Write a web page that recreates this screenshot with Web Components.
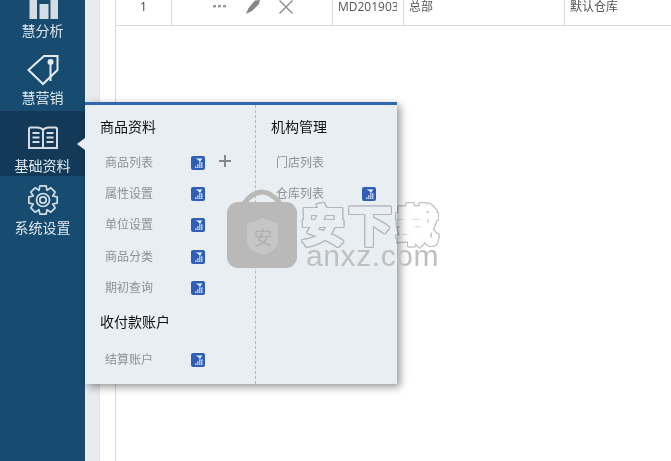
<!DOCTYPE html>
<html>
<head>
<meta charset="utf-8">
<style>
  html, body { margin: 0; height: 100%; overflow: hidden; background: #fff; }
  body { font-family: "Liberation Sans", "Noto Sans CJK SC", sans-serif; }
</style>
</head>
<body>
<app-shell>
  <side-nav slot="nav">
    <nav-item label="慧分析" icon="chart" height="46" pad="6" gap="2"></nav-item>
    <nav-item label="慧营销" icon="tag" height="65" pad="4" gap="3"></nav-item>
    <nav-item label="基础资料" icon="book" height="65" pad="1" gap="7" active></nav-item>
    <nav-item label="系统设置" icon="gear" height="65" pad="4" gap="3"></nav-item>
  </side-nav>
  <data-row slot="main"></data-row>
  <pop-menu slot="main"></pop-menu>
  <water-mark slot="main"></water-mark>
</app-shell>

<script>
const FONT = '"Liberation Sans", "Noto Sans CJK SC", sans-serif';

function gearPath(cx, cy, ro, ri, n) {
  // one tooth = four corners, going round the wheel
  const pts = [];
  const step = Math.PI * 2 / n;
  for (let i = 0; i < n; i++) {
    const a = i * step - Math.PI / 2;
    [[ri, -0.5], [ro, -0.27], [ro, 0.27], [ri, 0.5]].forEach(([r, k]) => {
      pts.push((cx + r * Math.cos(a + k * step)).toFixed(1) + ' ' + (cy + r * Math.sin(a + k * step)).toFixed(1));
    });
  }
  return 'M' + pts.join(' L') + ' Z';
}

class AppShell extends HTMLElement {
  constructor() {
    super();
    this.attachShadow({ mode: 'open' });
    this.shadowRoot.innerHTML = `
      <style>
        :host { display: flex; height: 461px; width: 671px; overflow: hidden; }
        .nav { flex: 0 0 85px; background: #174c70; }
        .gutter { flex: 0 0 15px; background: #e8ecf1; border-right: 1px solid #dfe3e8; box-sizing: border-box; }
        .spacer { flex: 0 0 16px; background: #fff; border-right: 1px solid #d9d9d9; box-sizing: border-box; }
        .main { flex: 1; position: relative; background: #fff; }
      </style>
      <div class="nav"><slot name="nav"></slot></div>
      <div class="gutter"></div>
      <div class="spacer"></div>
      <div class="main"><slot name="main"></slot></div>
    `;
  }
}

const ICONS = {
  chart: `<svg width="30" height="20" viewBox="0 0 30 20"><g fill="#d5dde4"><rect x="1.5" y="-4" width="7.5" height="23"/><rect x="11.5" y="4" width="9" height="15"/><rect x="22.5" y="-4" width="8" height="23"/></g></svg>`,
  tag: `<svg width="34" height="34" viewBox="0 0 34 34" fill="none" stroke="#e6ebef" stroke-width="2"><path d="M2.5 18 L18 4 H31.5 V18 L17 32 Z"/><circle cx="24.5" cy="10" r="2" fill="#e6ebef"/><path d="M24.5 11 V29"/></svg>`,
  book: `<svg width="32" height="25" viewBox="0 0 32 25" fill="none" stroke="#d5dde4" stroke-width="2"><path d="M16 5 Q14 2.5 10 2.5 H3.5 Q2 2.5 2 4 V23 H16 Z"/><path d="M16 5 Q18 2.5 22 2.5 H28.5 Q30 2.5 30 4 V23 H16 Z"/><path d="M5.5 8 H12.5 M5.5 12.5 H12.5 M5.5 17 H12.5 M19.5 8 H26.5 M19.5 12.5 H26.5 M19.5 17 H26.5" stroke-width="2.2"/></svg>`,
  gear: `<svg width="32" height="32" viewBox="0 0 32 32" fill="none" stroke="#d5dde4" stroke-width="1.7" stroke-linejoin="round"><path d="${gearPath(16, 16, 14.5, 10.5, 8)}"/><circle cx="16" cy="16" r="6.5"/><circle cx="16" cy="16" r="3.2"/></svg>`
};

class SideNav extends HTMLElement {
  constructor() {
    super();
    this.attachShadow({ mode: 'open' });
    this.shadowRoot.innerHTML = `
      <style>:host { display: flex; flex-direction: column; }</style>
      <slot></slot>
    `;
  }
}

class NavItem extends HTMLElement {
  constructor() {
    super();
    this.attachShadow({ mode: 'open' });
  }
  connectedCallback() {
    const active = this.hasAttribute('active');
    this.shadowRoot.innerHTML = `
      <style>
        :host { display: flex; flex-direction: column; align-items: center; justify-content: flex-end;
                height: ${this.getAttribute('height')}px; box-sizing: border-box;
                padding-bottom: ${this.getAttribute('pad')}px;
                background: ${active ? '#123a58' : 'transparent'}; color: #dfe6eb;
                font: 14px ${FONT}; overflow: hidden; }
        .icon { display: flex; justify-content: center; margin-bottom: ${this.getAttribute('gap')}px; }
        svg { display: block; flex: none; }
        .label { line-height: 18px; white-space: nowrap; }
      </style>
      <div class="icon">${ICONS[this.getAttribute('icon')]}</div>
      <div class="label">${this.getAttribute('label')}</div>
    `;
  }
}

class DataRow extends HTMLElement {
  constructor() {
    super();
    this.attachShadow({ mode: 'open' });
    this.shadowRoot.innerHTML = `
      <style>
        :host { display: grid; grid-template-columns: 56px 161px 71px 161px 1fr; height: 26px; box-sizing: border-box;
                border-bottom: 1px solid #d9d9d9; color: #555; font: 12px/12px "Open Sans", "Noto Sans CJK SC", sans-serif; }
        .cell { display: flex; align-items: center; height: 25px; box-sizing: border-box; padding-bottom: 12px;
                white-space: nowrap; border-right: 1px solid #d9d9d9; }
        .cell:last-child { border-right: 0; }
        .num { justify-content: center; color: #444; }
        .ops { padding-left: 41px; }
        .code, .txt { padding-left: 5px; }
        .code span { display: block; width: 59px; overflow-x: clip; }
        svg { display: block; flex: none; }
      </style>
      <div class="cell num">1</div>
      <div class="cell ops">
        <svg width="13" height="3" viewBox="0 0 13 3" fill="#999"><rect width="3" height="2.4"/><rect x="5" width="3" height="2.4"/><rect x="10" width="3" height="2.4"/></svg>
        <svg style="margin-left:20px" width="14" height="14" viewBox="0 0 14 14" fill="#868686"><path d="M0 14 L2.5 8 L9 0.5 L14 0 L13 4 L6 11 Z"/></svg>
        <svg style="margin-left:19px" width="14" height="14" viewBox="0 0 14 14" stroke="#919191" stroke-width="1.5" fill="none"><path d="M0.5 0.5 L13.5 13.5 M13.5 0.5 L0.5 13.5"/></svg>
      </div>
      <div class="cell code"><span>MD201903</span></div>
      <div class="cell txt">总部</div>
      <div class="cell txt">默认仓库</div>
    `;
  }
}

class PopMenu extends HTMLElement {
  constructor() {
    super();
    this.attachShadow({ mode: 'open' });
    this.shadowRoot.innerHTML = `
      <style>
        :host { display: flex; position: absolute; left: -31px; top: 102px; width: 312px; height: 282px; box-sizing: border-box;
                background: #e9eef3; border-top: 3px solid #2f68ad; box-shadow: 3px 3px 8px rgba(0,0,0,.42); font: 12px ${FONT}; }
        :host::before { content: ""; position: absolute; left: -8px; top: 33px; border: 6px solid transparent; border-left-width: 0; border-right: 8px solid #e9eef3; }
        .col { box-sizing: border-box; padding-left: 15px; display: flex; flex-direction: column; }
        .left { width: 171px; border-right: 1px dashed #b4b8bd; }
        .right { flex: 1; }
      </style>
      <div class="col left">
        <menu-head>商品资料</menu-head>
        <menu-link plus>商品列表</menu-link>
        <menu-link>属性设置</menu-link>
        <menu-link>单位设置</menu-link>
        <menu-link>商品分类</menu-link>
        <menu-link>期初查询</menu-link>
        <menu-head second>收付款账户</menu-head>
        <menu-link>结算账户</menu-link>
      </div>
      <div class="col right">
        <menu-head>机构管理</menu-head>
        <menu-link noicon>门店列表</menu-link>
        <menu-link>仓库列表</menu-link>
      </div>
    `;
  }
}

class MenuHead extends HTMLElement {
  constructor() {
    super();
    this.attachShadow({ mode: 'open' });
  }
  connectedCallback() {
    const second = this.hasAttribute('second');
    this.shadowRoot.innerHTML = `
      <style>
        :host { display: block; color: #111; font-size: 14px; line-height: 18px;
                padding-top: ${second ? 11 : 13}px; padding-bottom: ${second ? 12 : 10}px; }
      </style>
      <slot></slot>
    `;
  }
}

class MenuLink extends HTMLElement {
  constructor() {
    super();
    this.attachShadow({ mode: 'open' });
  }
  connectedCallback() {
    const icon = this.hasAttribute('noicon') ? '' : `
      <svg class="badge" width="14" height="14" viewBox="0 0 14 14">
        <rect width="14" height="14" rx="2" fill="#2f5fb5"/>
        <path d="M4.5 2.5 H11.5 L9.8 4.2 V5.5 H7.8 V4.2 Z" fill="#eef3fb"/>
        <g fill="#f2f6fc">
          <rect x="8" y="6.5" width="1.5" height="1.3"/><rect x="10" y="6.5" width="1.5" height="1.3"/>
          <rect x="6" y="8.5" width="1.5" height="1.3"/><rect x="8" y="8.5" width="1.5" height="1.3"/><rect x="10" y="8.5" width="1.5" height="1.3"/>
          <rect x="4" y="10.5" width="1.5" height="1.3"/><rect x="6" y="10.5" width="1.5" height="1.3"/><rect x="8" y="10.5" width="1.5" height="1.3"/><rect x="10" y="10.5" width="1.5" height="1.3"/>
        </g>
      </svg>`;
    const plus = this.hasAttribute('plus') ? `
      <svg class="plus" width="12" height="12" viewBox="0 0 12 12" fill="#808890"><rect y="5" width="12" height="2"/><rect x="5" width="2" height="12"/></svg>` : '';
    this.shadowRoot.innerHTML = `
      <style>
        :host { display: flex; align-items: center; height: 31.2px; padding-left: 5px; color: #8c9196; font-size: 12px; }
        .text { width: 86px; flex: none; }
        svg { display: block; flex: none; }
        .badge { margin-top: 3px; }
        .plus { margin-left: 14px; margin-top: -1px; }
      </style>
      <span class="text"><slot></slot></span>${icon}${plus}
    `;
  }
}

class WaterMark extends HTMLElement {
  constructor() {
    super();
    this.attachShadow({ mode: 'open' });
    this.shadowRoot.innerHTML = `
      <style>
        :host { position: absolute; left: 111px; top: 188px; width: 230px; height: 90px; display: block; pointer-events: none; }
        .bag { position: absolute; left: 0; top: 0; }
        .cn { position: absolute; left: 75px; top: 10px; font: 42px/50px "Noto Sans CJK SC", sans-serif; letter-spacing: 5px; white-space: nowrap;
              color: #fff; -webkit-text-stroke: 4px #fff; mix-blend-mode: multiply;
              filter: drop-shadow(1px 0 0 #c4c4c4) drop-shadow(-1px 0 0 #c4c4c4) drop-shadow(0 1px 0 #c4c4c4) drop-shadow(0 -1px 0 #c4c4c4); }
        .en { position: absolute; left: 79px; top: 52px; font: 30px/32px "Liberation Sans", sans-serif; color: #bfbfbf; white-space: nowrap; letter-spacing: .6px; }
      </style>
      <svg class="bag" width="72" height="82" viewBox="0 0 72 82">
        <path d="M18 18 V14 Q35 -6 52 14 V18" fill="none" stroke="#b9b9b9" stroke-width="5"/>
        <rect x="0" y="14" width="70" height="66" rx="11" fill="#b9b9b9"/>
        <path d="M20 36 L36 30 L51 36 V53 Q51 62 36 67 Q20 62 20 53 Z" fill="#c6c6c6"/>
        <text x="36" y="57" text-anchor="middle" font-size="19" fill="#b0b0b0" font-family="Noto Sans CJK SC, sans-serif">安</text>
      </svg>
      <div class="cn">安下载</div>
      <div class="en">anxz.com</div>
    `;
  }
}

customElements.define('app-shell', AppShell);
customElements.define('side-nav', SideNav);
customElements.define('nav-item', NavItem);
customElements.define('data-row', DataRow);
customElements.define('pop-menu', PopMenu);
customElements.define('menu-head', MenuHead);
customElements.define('menu-link', MenuLink);
customElements.define('water-mark', WaterMark);
</script>
</body>
</html>
